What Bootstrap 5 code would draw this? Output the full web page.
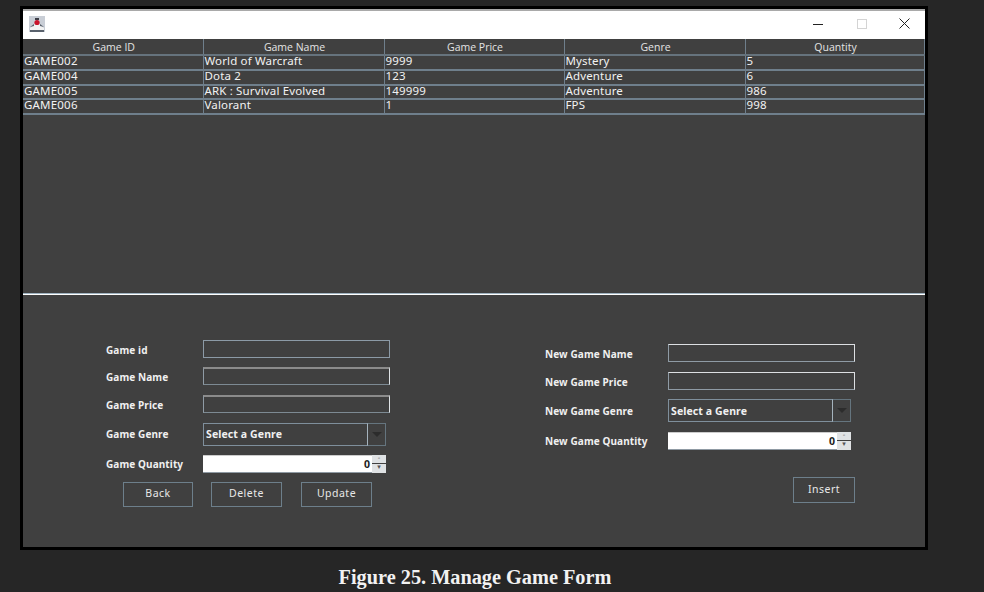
<!DOCTYPE html>
<html lang="en">
<head>
<meta charset="utf-8">
<title>Manage Game Form</title>
<link href="https://cdn.jsdelivr.net/npm/bootstrap@5.3.0/dist/css/bootstrap.min.css" rel="stylesheet">
<style>
html,body{height:100%;overflow:hidden}
body{background:#262626;font-family:"Liberation Sans",sans-serif;color:#fff}
.app-frame{width:908px;height:544px;margin:6px 0 0 20px;border:3px solid #000;background:#404040}
.title-strip{height:30px;background:#fff;border-top:2px solid #a9a9a9;padding:0 15px 3px 6px}
.title-strip svg{display:block}
.gap-max{margin-left:34px}
.gap-close{margin-left:32px}
.grid-wrap{height:254px}
table.data-grid{table-layout:fixed;width:901px;margin:0;border-collapse:collapse;--bs-table-bg:transparent;--bs-table-color:#fff}
.data-grid th,.data-grid td{padding:0;background:transparent;color:#f2f2f2;border:1px solid #6f7f8c;border-width:0 1px 2px 1px;white-space:nowrap;box-shadow:none}
.data-grid th{height:15px;font-family:"Open Sans",sans-serif;font-weight:400;font-size:10.5px;line-height:13px;vertical-align:top;text-align:center;padding:2px 0 0 2px;color:#e4e4e4;border-left-color:#dcdcdc;border-bottom-color:#66737d}
.data-grid th:first-child,.data-grid td:first-child{border-left:0}
.data-grid td{height:15px;font-family:"Noto Sans",sans-serif;font-size:11.5px;line-height:9px;padding-left:1px;vertical-align:top;letter-spacing:.15px}
.data-grid td:first-child{letter-spacing:.2px}
.data-grid .short-row td{height:14px}
.split-line{height:2px;background:#fff;border-top:1px solid #9fb2c0}
.form-zone{padding-top:45px}
.left-form{width:522px;padding-left:83px}
.right-form{padding-top:4px}
.form-grid{display:grid;align-items:start;justify-items:start}
.left-form .form-grid{grid-template-columns:97px 187px;grid-template-rows:27px 28px 28px 32px 27px 25px}
.right-form .form-grid{grid-template-columns:123px 187px;grid-template-rows:28px 27px 33px 45px 27px}
.fld-label{font-family:"Noto Sans",sans-serif;font-weight:700;font-size:10px;line-height:20px;color:#f0f0f0;letter-spacing:.1px}
.left-form .combo-label{line-height:22px}
.right-form .combo-label{line-height:24px}
.fld-label.qty-label{line-height:18px}
.text-fld{width:187px;height:18px;padding:0;background:#404040;border:1px solid #8c9aa6;border-radius:0;box-shadow:none}
.text-fld.bright{border-color:#dfe3e6;border-top:2px solid #8b8b8b;border-bottom-color:#7d8a93;border-left-color:#8f9ba5}
.text-fld.white-edge{border-color:#dcdfe2;border-left-color:#8f9ba5;border-bottom-color:#8f9ba5}
.combo-box{height:23px}
.combo-text{width:165px;height:23px;border:1px solid #7f8f9c;border-right-color:#a5b3bd;padding-left:2px;font-family:"Noto Sans",sans-serif;font-weight:700;font-size:10.5px;line-height:22px;letter-spacing:.1px;color:#f0f0f0}
.left-form .combo-text{line-height:20px}
.combo-arrow{width:18px;height:23px;border:1px solid #65757f;border-left:0}
.combo-arrow i{display:block;width:0;height:0;border:5px solid transparent;border-top:5px solid #2c2c2c;border-bottom:0}
.spin-box{height:18px}
.spin-val{width:169px;height:18px;background:#fff;color:#222;text-align:right;font-family:"Noto Sans",sans-serif;font-weight:700;font-size:10.5px;line-height:17px;padding-right:2px;border-top:1px solid #ccc;border-bottom:1px solid #8f9aa3}
.spin-btns{width:14px}
.spin-btn{height:8px;background:#dfe2e4;color:#555;font-size:7px;line-height:6px;text-align:center;font-family:"DejaVu Sans",sans-serif}
.spin-btn+.spin-btn{height:9px;margin-top:1px}
.btn.flat-btn{height:25px;padding:0 0 4px;background:#404040;border:1px solid #6d7f8b;border-radius:0;color:#e8e8e8;font-family:"Noto Sans",sans-serif;font-size:10.5px;line-height:16px;letter-spacing:.5px}
.btn-row{grid-column:1 / 3;margin-left:17px}
.wb{width:70px}.wd{width:71px;margin-left:18px}.wu{width:71px;margin-left:19px}
.btn.flat-btn.wi{width:62px;height:26px;margin-left:248px;padding-bottom:2px}
.right-btn{grid-column:1 / 3}
.fig-caption{margin:0;width:950px;text-align:center;font-family:"Liberation Serif",serif;font-weight:700;font-size:20.3px;line-height:24px;color:#f2f2f2;padding-top:15px}
</style>
</head>
<body>
<div class="app-frame d-flex flex-column">
  <div class="title-strip d-flex align-items-center justify-content-between">
    <svg width="16" height="16" viewBox="0 0 16 16"><rect width="16" height="16" fill="#c9ced6"/><path d="M1 12l5-4h4l5 4v2H1z" fill="#f2f2f2"/><path d="M1 14h14v2H1zM1 11l4-3v2zM15 11l-4-3v2z" fill="#59616c"/><path d="M6 2h4v2H6z" fill="#3c3c46"/><circle cx="8" cy="6.5" r="2.6" fill="#c9142b"/></svg>
    <div class="d-flex align-items-center">
      <svg width="10" height="10" viewBox="0 0 10 10"><path d="M0 5.5h10" stroke="#222"/></svg>
      <svg class="gap-max" width="10" height="10" viewBox="0 0 10 10"><rect x=".5" y=".5" width="9" height="9" fill="none" stroke="#d4d4d4"/></svg>
      <svg class="gap-close" width="11" height="11" viewBox="0 0 11 11"><path d="M.5.5l10 10M10.5.5l-10 10" stroke="#222"/></svg>
    </div>
  </div>
  <div class="grid-wrap">
    <table class="table data-grid">
      <colgroup><col style="width:180px"><col style="width:181px"><col style="width:180px"><col style="width:181px"><col style="width:179px"></colgroup>
      <thead><tr><th>Game ID</th><th>Game Name</th><th>Game Price</th><th>Genre</th><th>Quantity</th></tr></thead>
      <tbody>
        <tr><td>GAME002</td><td>World of Warcraft</td><td>9999</td><td>Mystery</td><td>5</td></tr>
        <tr><td>GAME004</td><td>Dota 2</td><td>123</td><td>Adventure</td><td>6</td></tr>
        <tr class="short-row"><td>GAME005</td><td>ARK : Survival Evolved</td><td>149999</td><td>Adventure</td><td>986</td></tr>
        <tr><td>GAME006</td><td>Valorant</td><td>1</td><td>FPS</td><td>998</td></tr>
      </tbody>
    </table>
  </div>
  <div class="split-line"></div>
  <div class="form-zone d-flex">
    <div class="left-form">
      <div class="form-grid">
        <span class="fld-label">Game id</span><div class="text-fld"></div>
        <span class="fld-label">Game Name</span><div class="text-fld bright"></div>
        <span class="fld-label">Game Price</span><div class="text-fld bright"></div>
        <span class="fld-label combo-label">Game Genre</span>
        <div class="combo-box d-flex"><div class="combo-text">Select a Genre</div><div class="combo-arrow d-flex align-items-center justify-content-center"><i></i></div></div>
        <span class="fld-label qty-label">Game Quantity</span>
        <div class="spin-box d-flex"><div class="spin-val">0</div><div class="spin-btns"><div class="spin-btn">-</div><div class="spin-btn">▾</div></div></div>
        <div class="btn-row d-flex"><button class="btn flat-btn wb">Back</button><button class="btn flat-btn wd">Delete</button><button class="btn flat-btn wu">Update</button></div>
      </div>
    </div>
    <div class="right-form">
      <div class="form-grid">
        <span class="fld-label">New Game Name</span><div class="text-fld white-edge"></div>
        <span class="fld-label">New Game Price</span><div class="text-fld white-edge"></div>
        <span class="fld-label combo-label">New Game Genre</span>
        <div class="combo-box d-flex"><div class="combo-text">Select a Genre</div><div class="combo-arrow d-flex align-items-center justify-content-center"><i></i></div></div>
        <span class="fld-label qty-label">New Game Quantity</span>
        <div class="spin-box d-flex"><div class="spin-val">0</div><div class="spin-btns"><div class="spin-btn">-</div><div class="spin-btn">▾</div></div></div>
        <div class="right-btn"><button class="btn flat-btn wi">Insert</button></div>
      </div>
    </div>
  </div>
</div>
<p class="fig-caption">Figure 25. Manage Game Form</p>
<script src="https://cdn.jsdelivr.net/npm/bootstrap@5.3.0/dist/js/bootstrap.bundle.min.js"></script>
</body>
</html>
